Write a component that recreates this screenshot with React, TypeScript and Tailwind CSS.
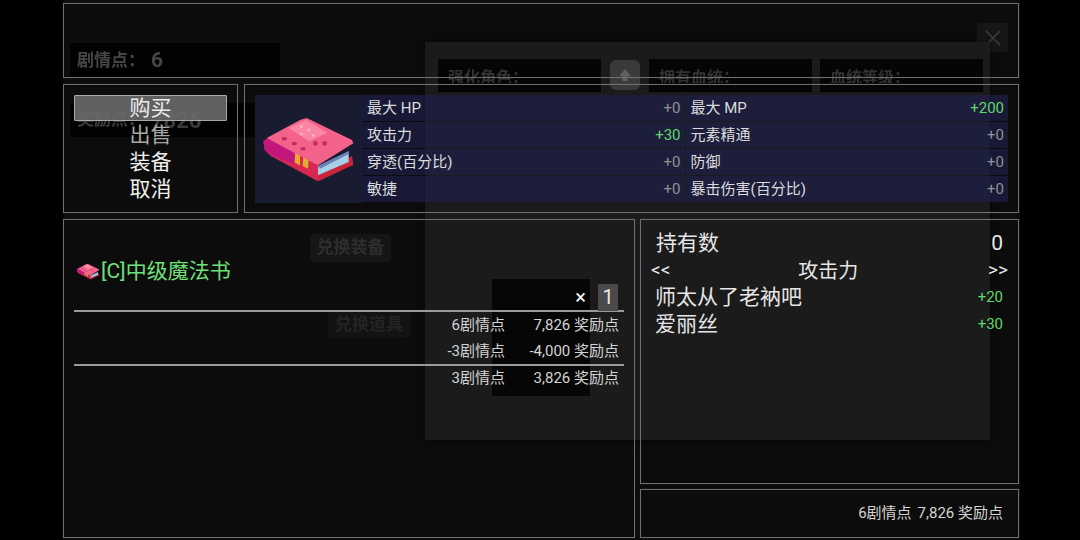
import React from "react";

function Book({ className, viewBox }: { className: string; viewBox: string }) {
  return (
    <svg className={className} viewBox={viewBox}>
      <path d="M196,222 L306,168 L310,194 L206,244 L192,238 Z" fill="#c9243c" />
      <path d="M204,198 L296,154 L296,186 L204,226 Z" fill="#a6cfe8" />
      <path d="M204,198 L296,154 L296,162 L210,206 Z" fill="#6a7fb4" />
      <path d="M40,124 L60,110 L204,190 L204,242 L190,236 L62,168 L44,150 Z" fill="#d9284f" />
      <path d="M40,124 L60,110 L134,150 L134,192 L62,166 L44,150 Z" fill="#c2187e" />
      <path d="M136,150 L150,158 L150,196 L134,188 Z" fill="#e2ab30" />
      <path d="M160,166 L176,174 L174,206 L158,198 Z" fill="#e2ab30" />
      <path d="M50,114 L150,60 L170,54 L306,120 L310,130 L204,196 L196,192 Z" fill="#f2628a" />
      <path d="M116,84 L168,60 L232,98 L178,124 Z" fill="#fa86a4" />
      <g fill="#c22a5c">
        <rect x="190" y="124" width="12" height="12" />
        <rect x="218" y="124" width="12" height="12" />
        <rect x="96" y="112" width="14" height="9" />
        <rect x="126" y="126" width="14" height="9" />
        <rect x="152" y="142" width="14" height="9" />
      </g>
      <g fill="#fbb0c4">
        <rect x="150" y="76" width="8" height="8" />
        <rect x="172" y="86" width="8" height="8" />
        <rect x="150" y="98" width="8" height="8" />
        <rect x="186" y="102" width="8" height="8" />
      </g>
    </svg>
  );
}

const stats: [string, string, boolean, string, string, boolean][] = [
  ["最大 HP", "+0", false, "最大 MP", "+200", true],
  ["攻击力", "+30", true, "元素精通", "+0", false],
  ["穿透(百分比)", "+0", false, "防御", "+0", false],
  ["敏捷", "+0", false, "暴击伤害(百分比)", "+0", false],
];

function Ghost() {
  return (
    <div className="absolute left-[63px] top-0 w-[957px] h-[540px] bg-[#0c0c0c] overflow-hidden">
      <div className="absolute left-[7px] top-[43px] w-[210px] h-[35px] bg-[#020202] flex items-center pl-[7px] gap-[6px] text-[#464646] font-bold blur-[0.5px]">
        <span className="text-[17px]">{"剧情点\uFF1A"}</span>
        <span className="text-[21px]">6</span>
      </div>
      <div className="absolute left-[7px] top-[103px] w-[210px] h-[34px] bg-[#020202] flex items-center pl-[7px] gap-[6px] text-[#3a3a3a] font-bold blur-[0.5px]">
        <span className="text-[17px]">{"奖励点\uFF1A"}</span>
        <span className="text-[22px]">7826</span>
      </div>
      <div className="absolute left-[247px] top-[234px] w-[81px] h-[28px] rounded-[4px] bg-[#161616] flex items-center justify-center text-[17px] font-bold text-[#2e2e2e] blur-[0.5px]">
        兑换装备
      </div>
      <div className="absolute left-[265px] top-[311px] w-[82px] h-[27px] rounded-[4px] bg-[#131313] flex items-center justify-center text-[17px] font-bold text-[#242424] blur-[0.5px]">
        兑换道具
      </div>
      <div className="absolute left-[914px] top-[23px] w-[31px] h-[29px] bg-[#161616] flex items-center justify-center">
        <svg className="w-[18px] h-[18px]" viewBox="0 0 18 18" fill="none" stroke="#3d3d3d" strokeWidth="1.6">
          <path d="M2 2 L16 16 M16 2 L2 16" />
        </svg>
      </div>
      <div className="absolute left-[362px] top-[42px] w-[565px] h-[398px] bg-[#1b1b1b] shadow-[0_0_6px_rgba(0,0,0,0.6)]">
        <div className="absolute left-[13px] top-[17px] w-[163px] h-[33px] bg-[#050505] pl-[10px] pt-[8px] text-[16px] font-bold text-[#323232]">
          <div className="h-[16px] overflow-hidden leading-[22px] blur-[0.5px]">{"强化角色\uFF1A"}</div>
        </div>
        <div className="absolute left-[185px] top-[18px] w-[30px] h-[30px] rounded-[6px] bg-[#3a3a3a] flex items-center justify-center">
          <svg className="w-[14px] h-[14px]" viewBox="0 0 14 14" fill="#606060">
            <path d="M7 1 L13 8 H9.5 V13 H4.5 V8 H1 Z" />
          </svg>
        </div>
        <div className="absolute left-[224px] top-[17px] w-[163px] h-[33px] bg-[#050505] pl-[10px] pt-[8px] text-[16px] font-bold text-[#323232]">
          <div className="h-[16px] overflow-hidden leading-[22px] blur-[0.5px]">{"拥有血统\uFF1A"}</div>
        </div>
        <div className="absolute left-[395px] top-[17px] w-[163px] h-[33px] bg-[#050505] pl-[10px] pt-[8px] text-[16px] font-bold text-[#323232]">
          <div className="h-[16px] overflow-hidden leading-[22px] blur-[0.5px]">{"血统等级\uFF1A"}</div>
        </div>
        <div className="absolute left-[67px] top-[237px] w-[98px] h-[117px] bg-[#060606]" />
      </div>
    </div>
  );
}

const panel = "border border-[#6f6f6f] shadow-[0_0_1px_rgba(255,255,255,0.15)]";

export default function App() {
  return (
    <div className="relative w-[1080px] h-[540px] overflow-hidden bg-black text-[#dedede] font-['Roboto','Noto_Sans_CJK_SC',sans-serif]">
      <Ghost />
      <div className="relative ml-[63px] w-[956px] h-[540px] pt-[3px] flex flex-col gap-[6px]">
        <div className={`h-[75px] ${panel}`} />

        <div className="h-[129px] flex gap-[6px]">
          <div className={`w-[175px] ${panel} px-[10px] pt-[10px] text-[21px] text-center leading-[27px]`}>
            <div className="relative h-[27px] text-[#ececec]">
              <div className="absolute inset-x-0 top-0 h-[26px] rounded-[1px] bg-[#6a6a6a]/90 border border-[#a8a8a8]" />
              <span className="relative">购买</span>
            </div>
            <div className="h-[27px] text-[#a8a8a8]">出售</div>
            <div className="h-[27px] text-[#f0f0f0]">装备</div>
            <div className="h-[27px] text-[#f0f0f0]">取消</div>
          </div>
          <div className={`flex-1 ${panel} px-[10px] pt-[10px] flex`}>
            <div className="w-[107px] h-[108px] bg-[#191b30] shrink-0">
              <Book className="w-[106px] h-[108px] blur-[0.7px]" viewBox="15 -15 318 324" />
            </div>
            <div className="flex-1 flex flex-col gap-px">
              {stats.map((r) => (
                <div key={r[0]} className="h-[26px] flex gap-px text-[15px]">
                  <div className="flex-1 bg-[#1c1f48]/70 flex items-center justify-between pl-[5px] pr-[4px] pt-px">
                    <span className="text-[#dcdcdc]">{r[0]}</span>
                    <span className={r[2] ? "text-[#5fd86a]" : "text-[#929292]"}>{r[1]}</span>
                  </div>
                  <div className="flex-1 bg-[#1c1f48]/70 flex items-center justify-between pl-[5px] pr-[4px] pt-px">
                    <span className="text-[#dcdcdc]">{r[3]}</span>
                    <span className={r[5] ? "text-[#5fd86a]" : "text-[#929292]"}>{r[4]}</span>
                  </div>
                </div>
              ))}
            </div>
          </div>
        </div>

        <div className="flex-1 flex gap-[5px] pb-[2px]">
          <div className={`w-[572px] ${panel} px-[10px] pt-[38px]`}>
            <div className="h-[27px] flex items-center text-[21px] text-[#6fe07a]">
              <Book className="w-[24px] h-[17px] shrink-0 ml-[2px] mr-px blur-[0.3px]" viewBox="30 45 290 205" />
              <span>[C]中级魔法书</span>
            </div>
            <div className="h-[26px] mt-[-1px] flex items-center justify-end pr-[6px]">
              <span className="text-[20px] text-white mr-[12px]">×</span>
              <span className="w-[20px] h-[27px] bg-[#4a4a4a] text-[20px] text-center leading-[27px] text-[#e8e8e8]">1</span>
            </div>
            <div className="border-t-[2px] border-[#9a9a9a] text-[15px] text-[#d4d4d4]">
              <div className="h-[26px] flex items-center justify-end pr-[5px]">
                <span>6剧情点</span>
                <span className="w-[114px] text-right">7,826 奖励点</span>
              </div>
              <div className="h-[26px] flex items-center justify-end pr-[5px]">
                <span>-3剧情点</span>
                <span className="w-[114px] text-right">-4,000 奖励点</span>
              </div>
            </div>
            <div className="border-t-[2px] border-[#9a9a9a] text-[15px] text-[#d4d4d4]">
              <div className="h-[25px] flex items-center justify-end pr-[5px]">
                <span>3剧情点</span>
                <span className="w-[114px] text-right">3,826 奖励点</span>
              </div>
            </div>
          </div>

          <div className="flex-1 flex flex-col gap-[5px]">
            <div className={`h-[265px] ${panel} pt-[10px] pl-[10px] pr-[10px]`}>
              <div className="h-[27px] flex items-center justify-between px-[5px] text-[21px] text-[#e6e6e6]">
                <span>持有数</span>
                <span>0</span>
              </div>
              <div className="h-[27px] flex items-center justify-between text-[#e6e6e6]">
                <span className="text-[19px]">&lt;&lt;</span>
                <span className="text-[20px] ml-[-2px]">攻击力</span>
                <span className="text-[19px]">&gt;&gt;</span>
              </div>
              <div className="h-[27px] flex items-center justify-between pl-[4px] pr-[5px] text-[21px] text-[#e6e6e6]">
                <span>师太从了老衲吧</span>
                <span className="text-[15px] text-[#5fd86a]">+20</span>
              </div>
              <div className="h-[27px] flex items-center justify-between pl-[4px] pr-[5px] text-[21px] text-[#e6e6e6]">
                <span>爱丽丝</span>
                <span className="text-[15px] text-[#5fd86a]">+30</span>
              </div>
            </div>
            <div className={`flex-1 ${panel} flex items-center justify-end pr-[15px] text-[15px] text-[#d4d4d4]`}>
              <span>6剧情点</span>
              <span className="ml-[6px]">7,826 奖励点</span>
            </div>
          </div>
        </div>
      </div>
    </div>
  );
}
